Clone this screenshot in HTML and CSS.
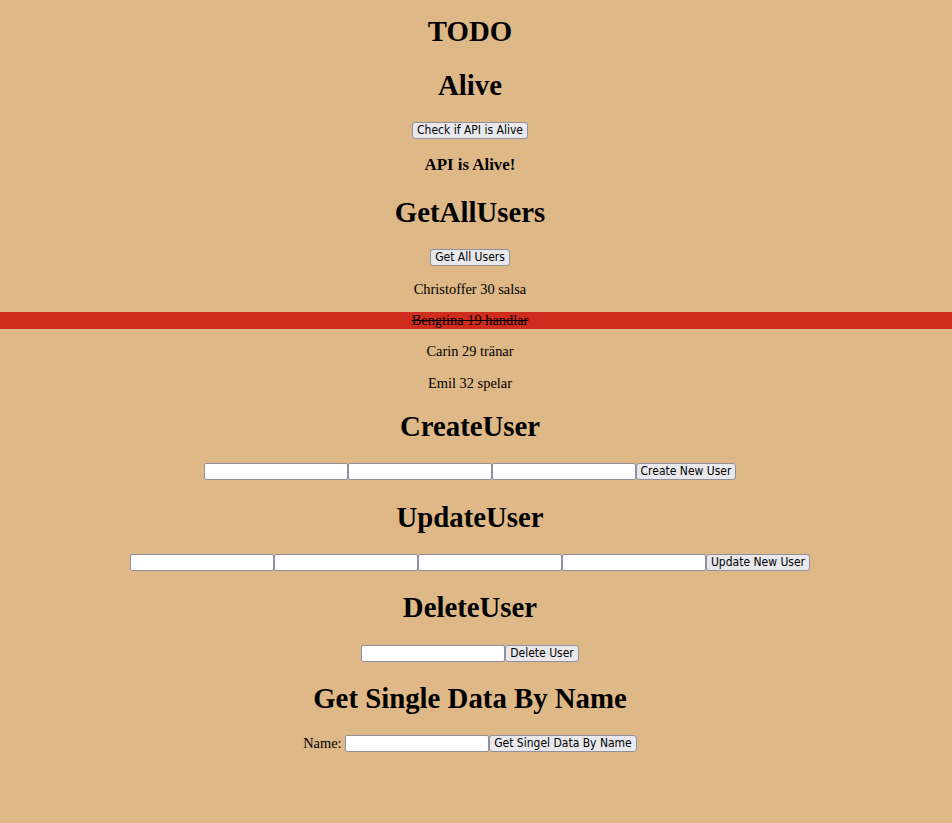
FILE: index.html
```html
<!DOCTYPE html>
<html>
<head>
<meta charset="utf-8">
<title>TODO</title>
<link rel="stylesheet" href="styles.css">
</head>
<body>
<main class="page">
<h1 class="title">TODO</h1>
<h1 class="section">Alive</h1>
<div class="row row-btn"><button class="btn">Check if API is Alive</button></div>
<h3 class="status">API is Alive!</h3>
<h1 class="section">GetAllUsers</h1>
<div class="row row-btn"><button class="btn">Get All Users</button></div>
<p class="user">Christoffer 30 salsa</p>
<p class="user done">Bengtina 19 handlar</p>
<p class="user">Carin 29 tränar</p>
<p class="user">Emil 32 spelar</p>
<h1 class="section after-list">CreateUser</h1>
<div class="row row-form"><input class="field" type="text"><input class="field" type="text"><input class="field" type="text"><button class="btn">Create New User</button></div>
<h1 class="section">UpdateUser</h1>
<div class="row row-form"><input class="field" type="text"><input class="field" type="text"><input class="field" type="text"><input class="field" type="text"><button class="btn">Update New User</button></div>
<h1 class="section">DeleteUser</h1>
<div class="row row-form"><input class="field" type="text"><button class="btn">Delete User</button></div>
<h1 class="section">Get Single Data By Name</h1>
<div class="row row-form"><label class="label">Name:&nbsp;</label><input class="field" type="text"><button class="btn">Get Singel Data By Name</button></div>
</main>
</body>
</html>
```
FILE: styles.css
```css
html, body {
  margin: 0;
  padding: 0;
  background: #deb887;
}
body {
  font-family: "Liberation Serif", "Times New Roman", serif;
  font-size: 14.4px;
  color: #000;
}
.page {
  text-align: center;
  padding-right: 12px;
  overflow: hidden;
  min-height: 823px;
}
.title, .section {
  font-size: 28.8px;
  font-weight: bold;
  margin: 19.3px 0;
}
.title {
  margin-top: 14.5px;
  margin-bottom: 21.3px;
}
.after-list {
  margin-top: 18.3px;
}
.status {
  font-size: 16.85px;
  font-weight: bold;
  margin: 15.85px 0 21px;
}
.user {
  margin: 14.4px 0;
}
.done {
  background: #d02c1e;
  text-decoration: line-through;
  margin-right: -12px;
  padding-right: 12px;
}
.row {
  display: flex;
  justify-content: center;
  align-items: center;
  font-size: 14.4px;
}
.row-btn {
  padding-top: 1px;
}
.row-form {
  height: 19px;
}
.btn {
  font-family: "DejaVu Sans Condensed", "DejaVu Sans", Verdana, sans-serif;
  font-stretch: condensed;
  font-size: 12px;
  line-height: 15px;
  color: #000;
  background: #e9e9ed;
  border: 1px solid #8f8f9d;
  border-radius: 3px;
  padding: 0 4px;
  margin: 0;
}
.field {
  width: 144px;
  height: 17px;
  box-sizing: border-box;
  border: 1px solid #8f8f9d;
  border-radius: 2px;
  background: #fff;
  padding: 0 3px;
  margin: 0;
}
.label {
  line-height: 17px;
}
```
